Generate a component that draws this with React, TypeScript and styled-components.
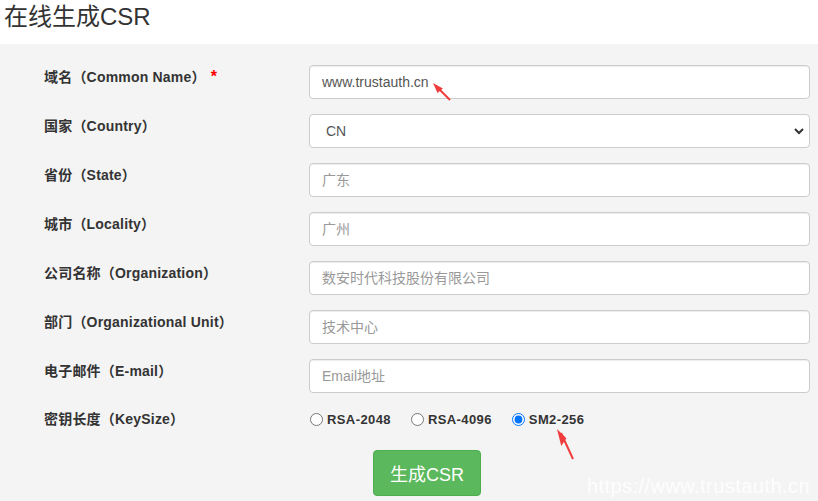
import { createGlobalStyle, styled } from 'styled-components';

const GlobalStyle = createGlobalStyle`
  html, body {
    margin: 0;
    padding: 0;
    background: #fff;
  }
  body {
    font-family: "Liberation Sans", Arial, "Noto Sans CJK SC", sans-serif;
    color: #333;
  }
`;

const Page = styled.div`
  position: relative;
  width: 818px;
  height: 501px;
  overflow: hidden;
  display: flex;
  flex-direction: column;
`;

const Title = styled.h1`
  margin: 0;
  height: 44px;
  padding: 3px 0 0 4px;
  box-sizing: border-box;
  font-size: 24px;
  line-height: 28px;
  font-weight: 400;
  color: #333;
`;

const Panel = styled.form`
  flex: 1;
  background: #f4f4f4;
  padding: 21px 8px 0 44px;
  display: flex;
  flex-direction: column;
  gap: 15px;
`;

const Row = styled.div`
  display: grid;
  grid-template-columns: 265px 501px;
  align-items: start;
`;

const RadioRow = styled(Row)`
  align-items: center;
  margin-top: 1px;
  height: 20px;
`;

const Label = styled.label<{ $center?: boolean }>`
  font-size: 14px;
  font-weight: 700;
  line-height: 20px;
  padding-top: ${(p) => (p.$center ? '0' : '2px')};
  color: #333;
  letter-spacing: 0.2px;
`;

const Star = styled.span`
  color: #ff0000;
  margin-left: 5px;
  font-size: 16px;
`;

const Input = styled.input`
  box-sizing: border-box;
  width: 501px;
  height: 34px;
  padding: 0 12px;
  border: 1px solid #ccc;
  border-radius: 4px;
  background: #fff;
  font-family: "Liberation Sans", Arial, "Noto Sans CJK SC", sans-serif;
  font-size: 14px;
  color: #555;
  box-shadow: inset 0 1px 1px rgba(0, 0, 0, 0.075);
  &::placeholder {
    color: #999;
  }
`;

const Select = styled.select`
  box-sizing: border-box;
  width: 501px;
  height: 34px;
  padding: 0 12px 0 16px;
  border: 1px solid #ccc;
  border-radius: 4px;
  background: #fff url("data:image/svg+xml;utf8,<svg xmlns='http://www.w3.org/2000/svg' width='12' height='12' viewBox='0 0 12 12'><path d='M2 4l4 4 4-4' fill='none' stroke='%23333' stroke-width='2'/></svg>") no-repeat right 4px center;
  appearance: none;
  font-family: "Liberation Sans", Arial, sans-serif;
  font-size: 14px;
  color: #555;
`;

const Radios = styled.div`
  display: flex;
  align-items: center;
  gap: 20px;
  padding-left: 1px;
`;

const RadioLabel = styled.label`
  display: flex;
  align-items: center;
  gap: 4px;
  font-size: 13px;
  font-weight: 700;
  color: #333;
  letter-spacing: 0.4px;
  input {
    margin: 0;
    width: 13px;
    height: 13px;
  }
`;

const Actions = styled.div`
  padding: 6px 0 0 329px;
`;

const Submit = styled.button`
  width: 108px;
  height: 46px;
  border: 1px solid #4cae4c;
  border-radius: 4px;
  background: #5cb85c;
  color: #fff;
  font-family: "Liberation Sans", Arial, "Noto Sans CJK SC", sans-serif;
  font-size: 18px;
  cursor: pointer;
`;

const Watermark = styled.div`
  position: absolute;
  right: 8px;
  bottom: 3px;
  font-family: "Liberation Sans", Arial, sans-serif;
  font-size: 20px;
  color: rgba(255, 255, 255, 0.92);
  letter-spacing: 0.45px;
`;

const Arrow = styled.svg<{ $x: number; $y: number }>`
  position: absolute;
  left: ${(p) => p.$x}px;
  top: ${(p) => p.$y}px;
  pointer-events: none;
`;

const fields = [
  { label: '省份（State）', placeholder: '广东' },
  { label: '城市（Locality）', placeholder: '广州' },
  { label: '公司名称（Organization）', placeholder: '数安时代科技股份有限公司' },
  { label: '部门（Organizational Unit）', placeholder: '技术中心' },
  { label: '电子邮件（E-mail）', placeholder: 'Email地址' },
];

const RedArrow = ({ x, y, w, h }: { x: number; y: number; w: number; h: number }) => (
  <Arrow $x={x} $y={y} width={w} height={h} viewBox={`0 0 ${w} ${h}`}>
    <line x1={w - 1} y1={h - 1} x2={4} y2={4} stroke="#f03c3c" strokeWidth="2" />
    <polygon points={`0,0 ${w * 0.55},${h * 0.3} ${w * 0.25},${h * 0.55}`} fill="#f03c3c" />
  </Arrow>
);

const App = () => {
  return (
    <Page>
      <GlobalStyle />
      <Title>在线生成CSR</Title>
      <Panel onSubmit={(e) => e.preventDefault()}>
        <Row>
          <Label>
            域名（Common Name）<Star>*</Star>
          </Label>
          <Input defaultValue="www.trustauth.cn" />
        </Row>
        <Row>
          <Label>国家（Country）</Label>
          <Select defaultValue="CN">
            <option value="CN">CN</option>
          </Select>
        </Row>
        {fields.map((f) => (
          <Row key={f.label}>
            <Label>{f.label}</Label>
            <Input placeholder={f.placeholder} />
          </Row>
        ))}
        <RadioRow>
          <Label $center>密钥长度（KeySize）</Label>
          <Radios>
            <RadioLabel>
              <input type="radio" name="keysize" /> RSA-2048
            </RadioLabel>
            <RadioLabel>
              <input type="radio" name="keysize" /> RSA-4096
            </RadioLabel>
            <RadioLabel>
              <input type="radio" name="keysize" defaultChecked /> SM2-256
            </RadioLabel>
          </Radios>
        </RadioRow>
        <Actions>
          <Submit type="submit">生成CSR</Submit>
        </Actions>
      </Panel>
      <RedArrow x={433} y={83} w={18} h={18} />
      <RedArrow x={557} y={429} w={17} h={31} />
      <Watermark>https://www.trustauth.cn</Watermark>
    </Page>
  );
};

export default App;
